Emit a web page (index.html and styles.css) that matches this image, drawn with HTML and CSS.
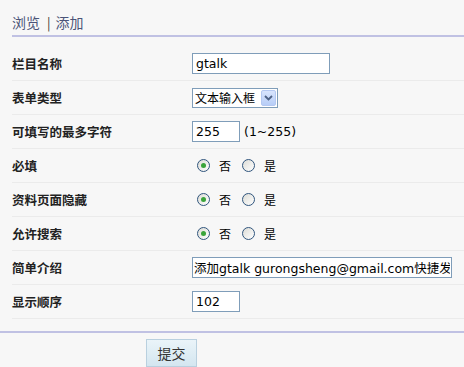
FILE: index.html
```html
<!DOCTYPE html>
<html lang="zh-CN">
<head>
    <meta charset="UTF-8">
    <title>添加栏目</title>
    <link rel="stylesheet" href="styles.css">
</head>
<body>
    <div class="nav">
        <a href="#">浏览</a><span class="sep">|</span><a href="#">添加</a>
    </div>

    <form class="field-form">
        <div class="row">
            <label class="row-label">栏目名称</label>
            <input type="text" class="text-input name-input" value="gtalk">
        </div>
        <div class="row">
            <label class="row-label">表单类型</label>
            <div class="select-wrap">
                <select class="type-select">
                    <option>文本输入框</option>
                </select>
                <span class="select-btn">
                    <svg width="9" height="6" viewBox="0 0 9 6"><path d="M1 1 L4.5 4.5 L8 1" fill="none" stroke="#4d6185" stroke-width="1.8"/></svg>
                </span>
            </div>
        </div>
        <div class="row">
            <label class="row-label">可填写的最多字符</label>
            <input type="text" class="text-input short-input" value="255">
            <span class="hint">(1~255)</span>
        </div>
        <div class="row">
            <label class="row-label">必填</label>
            <div class="radios">
                <input type="radio" name="required" checked><span class="radio-text">否</span>
                <input type="radio" name="required"><span class="radio-text">是</span>
            </div>
        </div>
        <div class="row">
            <label class="row-label">资料页面隐藏</label>
            <div class="radios">
                <input type="radio" name="hidden" checked><span class="radio-text">否</span>
                <input type="radio" name="hidden"><span class="radio-text">是</span>
            </div>
        </div>
        <div class="row">
            <label class="row-label">允许搜索</label>
            <div class="radios">
                <input type="radio" name="search" checked><span class="radio-text">否</span>
                <input type="radio" name="search"><span class="radio-text">是</span>
            </div>
        </div>
        <div class="row">
            <label class="row-label">简单介绍</label>
            <input type="text" class="text-input long-input" value="添加gtalk gurongsheng@gmail.com快捷发送">
        </div>
        <div class="row">
            <label class="row-label">显示顺序</label>
            <input type="text" class="text-input short-input" value="102">
        </div>
    </form>

    <div class="footer">
        <button type="button" class="submit-btn">提交</button>
    </div>
</body>
</html>
```

FILE: styles.css
```css
body {
    margin: 0;
    background-color: #f7f7f7;
    font-family: "DejaVu Sans", "Noto Sans CJK SC", sans-serif;
    font-size: 12px;
    color: #222;
    overflow: hidden;
}
.nav {
    margin-left: 12px;
    padding-top: 12px;
    height: 23px;
    border-bottom: 2px solid #c0c1e3;
    font-family: "Noto Sans CJK SC", sans-serif;
    font-size: 14px;
    line-height: 20px;
    color: #4b5478;
}
.nav a {
    color: #4b5478;
    text-decoration: none;
}
.nav .sep {
    color: #333;
    font-size: 13px;
    margin: 0 5px 0 7px;
}
.field-form {
    margin: 0 0 0 12px;
    padding: 10px 0 12px;
}
.row {
    display: flex;
    align-items: center;
    height: 33px;
    border-bottom: 1px solid #ebebeb;
}
.row-label {
    width: 180px;
    flex-shrink: 0;
    font-family: "Noto Sans CJK SC", sans-serif;
    font-weight: bold;
    font-size: 12.5px;
    color: #222;
}
.text-input {
    box-sizing: border-box;
    height: 21px;
    border: 1px solid #7f9db9;
    background: #fff;
    padding: 0 3px;
    margin: 0;
    font-family: "DejaVu Sans", "Noto Sans CJK SC", sans-serif;
    font-size: 12.5px;
    color: #000;
}
.name-input {
    width: 138px;
}
.short-input {
    width: 48px;
}
.long-input {
    width: 260px;
    padding: 0 1px;
}
.hint {
    margin-left: 4px;
    font-size: 12.5px;
    color: #000;
}
.select-wrap {
    position: relative;
    width: 86px;
    height: 20px;
}
.type-select {
    appearance: none;
    -webkit-appearance: none;
    box-sizing: border-box;
    width: 86px;
    height: 20px;
    margin: 0;
    padding: 0 0 0 2px;
    border: 1px solid #7f9db9;
    border-radius: 0;
    background: #fff;
    font-family: "Noto Sans CJK SC", sans-serif;
    font-size: 12px;
    color: #000;
}
.select-btn {
    position: absolute;
    top: 2px;
    right: 2px;
    width: 15px;
    height: 16px;
    box-sizing: border-box;
    border: 1px solid #b4c8f2;
    border-radius: 2px;
    background: linear-gradient(#d8e4fd, #b7cdf7);
    display: flex;
    align-items: center;
    justify-content: center;
}
.radios {
    display: flex;
    align-items: center;
    padding-left: 5px;
}
.radios input {
    appearance: none;
    -webkit-appearance: none;
    box-sizing: border-box;
    width: 13px;
    height: 13px;
    margin: 0 9px 0 0;
    border: 1px solid #30557d;
    border-radius: 50%;
    background: linear-gradient(135deg, #dcdcd6, #ffffff);
    position: relative;
}
.radios input:checked::after {
    content: "";
    position: absolute;
    left: 3px;
    top: 3px;
    width: 5px;
    height: 5px;
    border-radius: 50%;
    background: #3aa43a;
}
.radio-text {
    font-family: "Noto Sans CJK SC", sans-serif;
    font-size: 12px;
    color: #000;
    margin-right: 11px;
}
.footer {
    border-top: 2px solid #c0c1e3;
    padding: 6px 0 0 146px;
}
.submit-btn {
    width: 51px;
    height: 28px;
    border: 1px solid #b9d0df;
    background: linear-gradient(#eaf4f9, #d4e6f0);
    font-family: "Noto Sans CJK SC", sans-serif;
    font-size: 14px;
    color: #333;
    padding: 0;
}
```
